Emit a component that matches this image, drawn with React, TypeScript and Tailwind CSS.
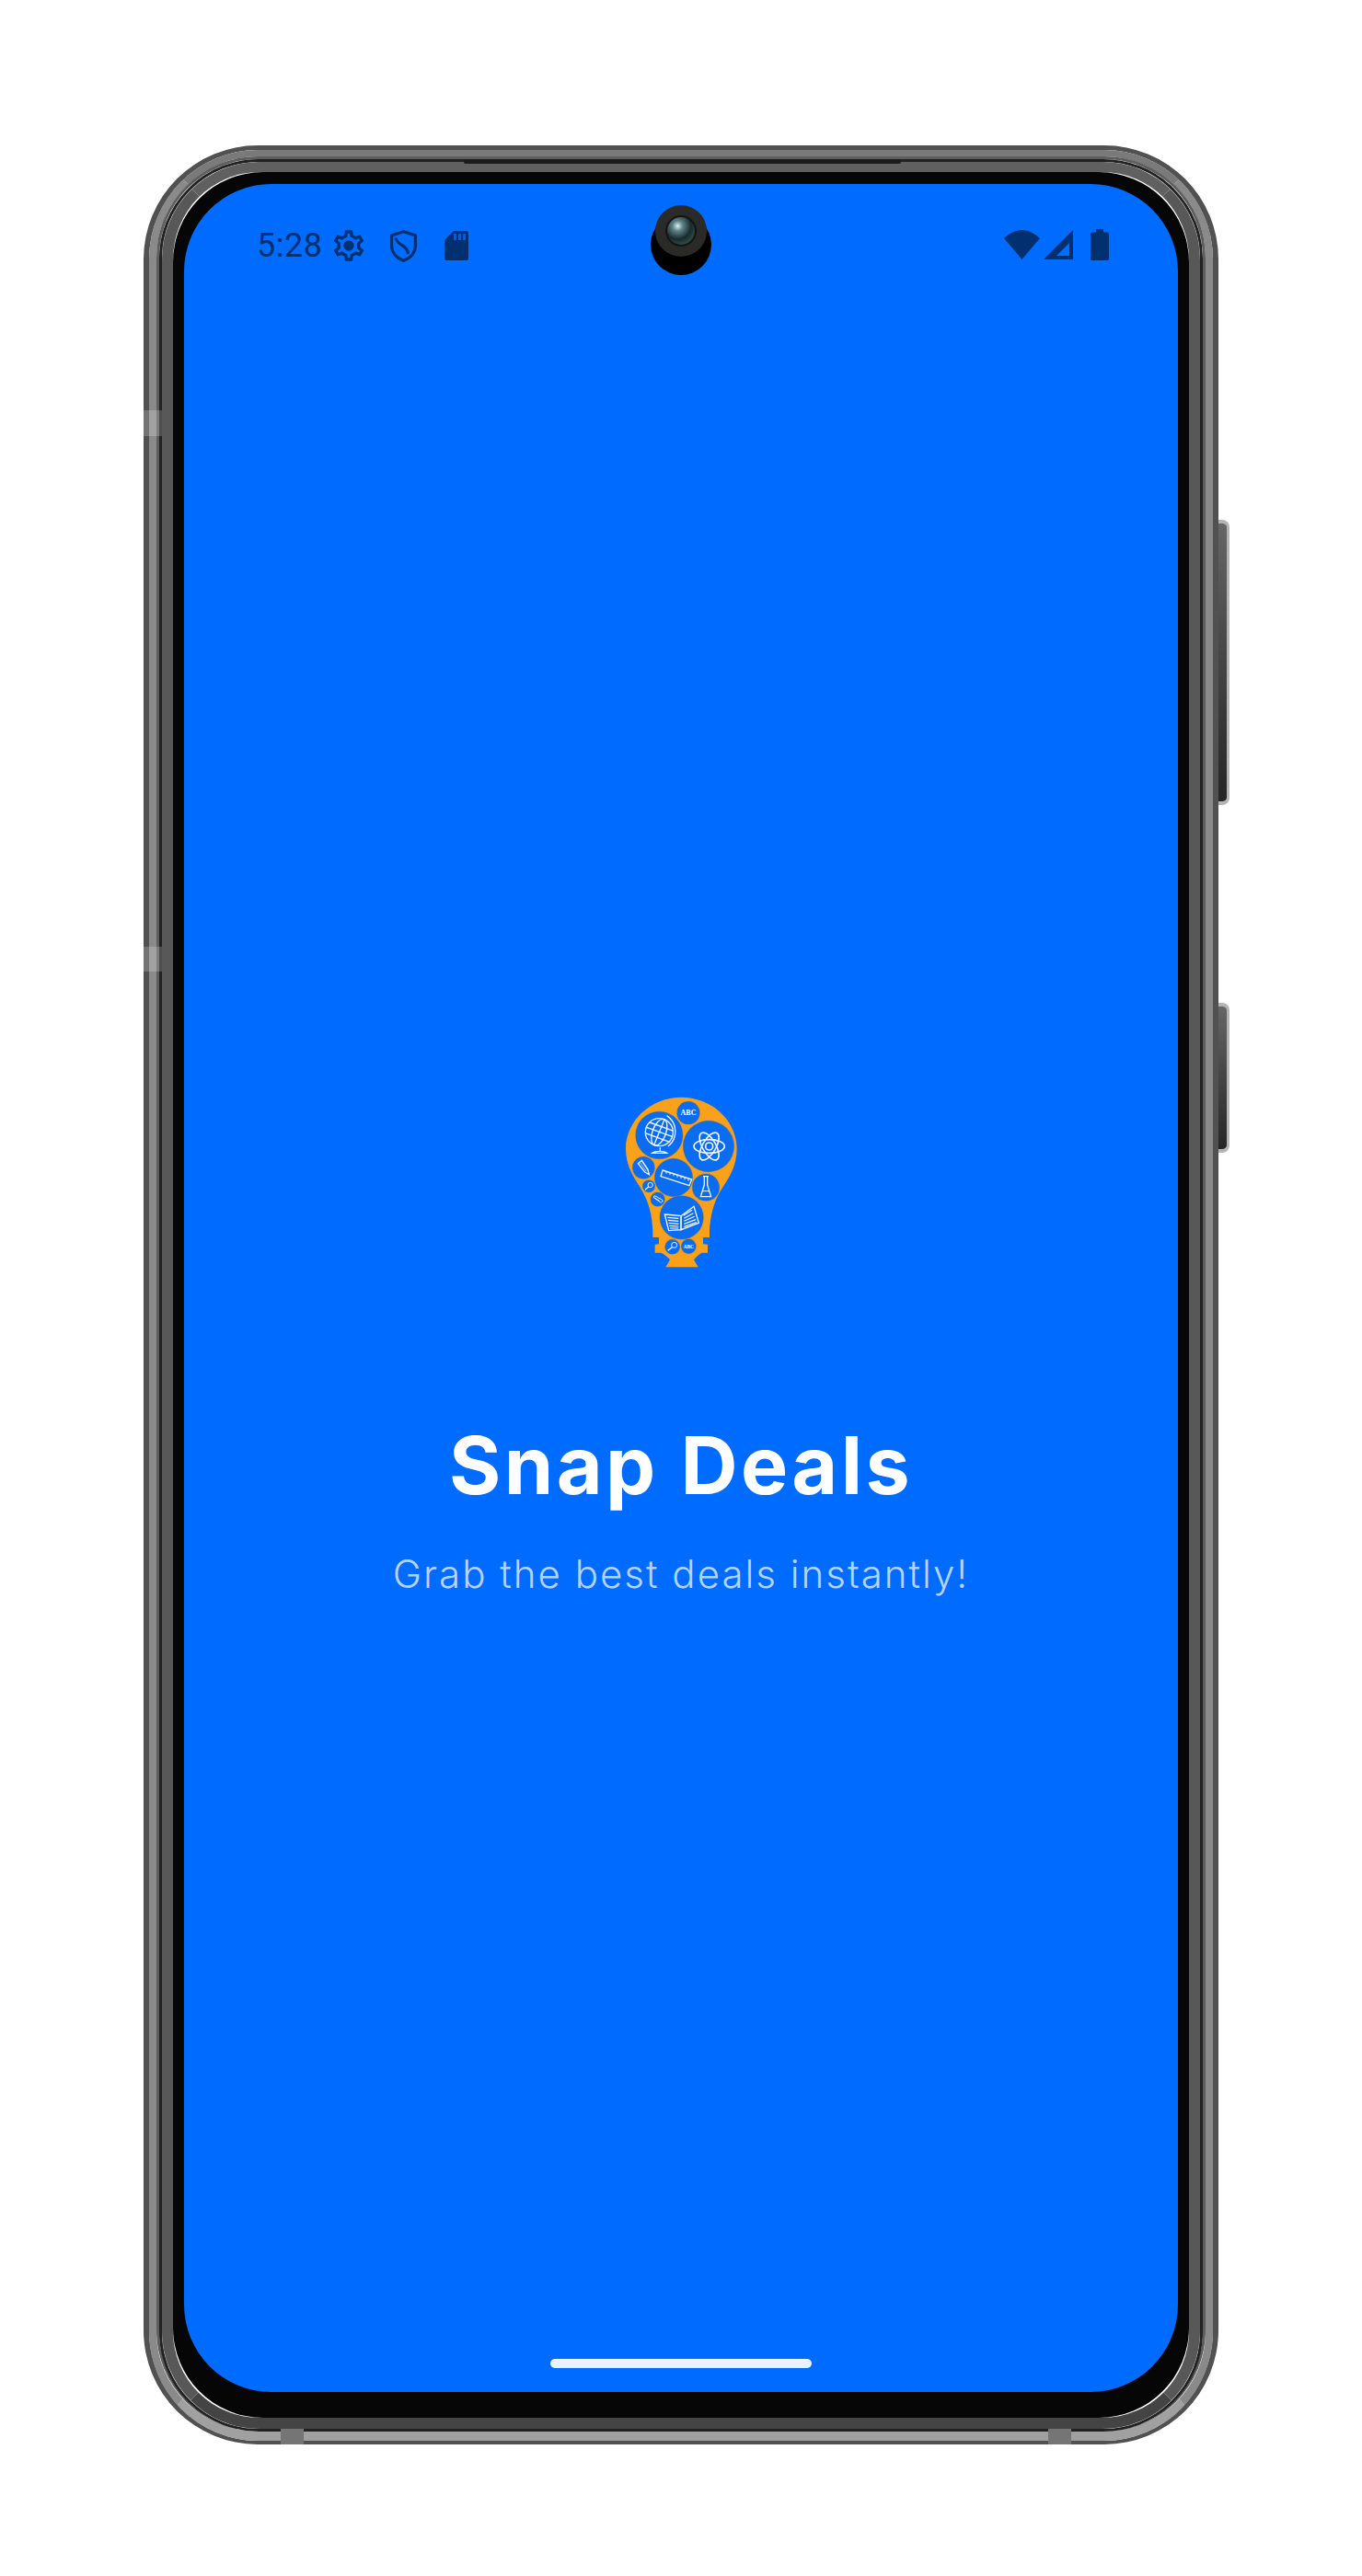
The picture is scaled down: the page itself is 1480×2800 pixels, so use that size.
import React from "react";

const ink = "#003070";

function Gear() {
  return (
    <svg width="40" height="40" viewBox="0 0 24 24" fill={ink} className="ml-[11px] mr-[25px]">
      <path d="M19.43 12.98c.04-.32.07-.64.07-.98 0-.34-.03-.66-.07-.98l2.11-1.65c.19-.15.24-.42.12-.64l-2-3.46c-.09-.16-.26-.25-.44-.25-.06 0-.12.01-.17.03l-2.49 1c-.52-.4-1.08-.73-1.69-.98l-.38-2.65C14.46 2.18 14.25 2 14 2h-4c-.25 0-.46.18-.49.42l-.38 2.65c-.61.25-1.17.59-1.69.98l-2.49-1c-.06-.02-.12-.03-.18-.03-.17 0-.34.09-.43.25l-2 3.46c-.13.22-.07.49.12.64l2.11 1.65c-.04.32-.07.65-.07.98 0 .33.03.66.07.98l-2.11 1.65c-.19.15-.24.42-.12.64l2 3.46c.09.16.26.25.44.25.06 0 .12-.01.17-.03l2.49-1c.52.4 1.08.73 1.69.98l.38 2.65c.03.24.24.42.49.42h4c.25 0 .46-.18.49-.42l.38-2.65c.61-.25 1.17-.59 1.69-.98l2.49 1c.06.02.12.03.18.03.17 0 .34-.09.43-.25l2-3.46c.12-.22.07-.49-.12-.64l-2.11-1.65zm-1.98-1.71c.04.31.05.52.05.73 0 .21-.02.43-.05.73l-.14 1.13.89.7 1.08.84-.7 1.21-1.27-.51-1.04-.42-.9.68c-.43.32-.84.56-1.25.73l-1.06.43-.16 1.13-.2 1.35h-1.4l-.19-1.35-.16-1.13-1.06-.43c-.43-.18-.83-.41-1.23-.71l-.91-.7-1.06.43-1.27.51-.7-1.21 1.08-.84.89-.7-.14-1.13c-.03-.31-.05-.54-.05-.74s.02-.43.05-.73l.14-1.13-.89-.7-1.08-.84.7-1.21 1.27.51 1.04.42.9-.68c.43-.32.84-.56 1.25-.73l1.06-.43.16-1.13.2-1.35h1.39l.19 1.35.16 1.13 1.06.43c.43.18.83.41 1.23.71l.91.7 1.06-.43 1.27-.51.7 1.21-1.07.85-.89.7.14 1.13z" />
      <circle cx="12" cy="12" r="3.4" />
    </svg>
  );
}

function Shield() {
  return (
    <svg width="29" height="35" viewBox="0 0 29 35" fill="none" stroke={ink} strokeWidth="3.2" className="mr-[30px]">
      <path d="M14.5 1.7 27.4 6v11c0 7.5-5.2 13.6-12.9 16.2C6.8 30.6 1.6 24.5 1.6 17V6Z" />
      <path d="M6 8.500c1 4.500 4 6.500 7.500 8.500 3.500 2 5.500 5 6 9" />
    </svg>
  );
}

function Sd() {
  return (
    <svg width="26" height="32" viewBox="0 0 26 32">
      <path d="M10 0h14a2 2 0 0 1 2 2v28a2 2 0 0 1-2 2H2a2 2 0 0 1-2-2V10Z" fill={ink} />
      <rect x="10" y="3" width="3" height="7" fill="#006cff" opacity="0.75" />
      <rect x="15" y="3" width="3" height="7" fill="#006cff" opacity="0.75" />
      <rect x="20" y="3" width="3" height="7" fill="#006cff" opacity="0.75" />
    </svg>
  );
}

function Wifi() {
  return (
    <svg width="39" height="32" viewBox="0 0 39 32" fill={ink} className="mr-[4px]">
      <path d="M0 9Q19.500-9 39 9L19.500 32Z" />
    </svg>
  );
}

function Signal() {
  return (
    <svg width="32" height="32" viewBox="0 0 32 32" fill={ink} fillRule="evenodd" className="mr-[19px]">
      <path d="M0 32 32 0v32ZM14 28h14V14Z" />
    </svg>
  );
}

function Battery() {
  return (
    <svg width="20" height="34" viewBox="0 0 20 34" fill={ink}>
      <path d="M6 0h8v3.500h4a2 2 0 0 1 2 2V32a2 2 0 0 1-2 2H2a2 2 0 0 1-2-2V5.500a2 2 0 0 1 2-2h4Z" />
    </svg>
  );
}

const bulb =
  "M241 68C340 68 422 145 422 235C422 300 392 335 366 378C348 410 336 450 333 503L333 525L312 525L312 547L327 548L327 575L308 575C298 580 288 590 282 598L296 622L190 622L204 598C198 590 186 580 175 575L155 575L155 548L168 547L168 525L148 525L148 503C146 450 134 410 116 378C92 335 60 300 60 235C60 145 142 68 241 68Z";

const discs: [number, number, number][] = [
  [264, 119, 37],
  [169, 192, 77],
  [330, 228, 83],
  [118, 298, 36],
  [216, 330, 62],
  [321, 362, 44],
  [135, 358, 20],
  [164, 401, 23],
  [242, 460, 71],
  [212, 556, 24],
  [265, 554, 24],
];

function Logo() {
  return (
    <svg width="160" height="220" viewBox="0 0 480 660" className="block">
      <path d={bulb} fill="#f9a11b" />
      {discs.map(([x, y, r], i) => (
        <g key={i}>
          <circle cx={x} cy={y} r={r + 1.5} fill="#a07a2a" opacity="0.55" />
          <circle cx={x} cy={y} r={r} fill="#0a6cf0" />
        </g>
      ))}
      <g fill="none" stroke="#f2f7ff" strokeWidth="4">
        <circle cx="169" cy="182" r="45" />
        <ellipse cx="169" cy="182" rx="22" ry="45" transform="rotate(20 169 182)" />
        <path d="M186 140 152 224M128 166 211 196M124 185 205 215M138 150 216 178" />
        <path d="M194 128a62 62 0 0 1 4 100M172 232v14M146 250c10-8 38-8 48 0Z" />
        <ellipse cx="332" cy="228" rx="50" ry="22" strokeWidth="5" />
        <ellipse cx="332" cy="228" rx="50" ry="22" strokeWidth="5" transform="rotate(60 332 228)" />
        <ellipse cx="332" cy="228" rx="50" ry="22" strokeWidth="5" transform="rotate(-60 332 228)" />
        <circle cx="332" cy="228" r="12" strokeWidth="5" />
        <path d="M100 284 112 274 132 304 136 320 122 312Z" />
        <path d="M106 280 127 310M112 276 131 304" strokeWidth="2" />
        <path d="M180 306 275 336 267 356 174 326Z" />
        <path d="M192 310v7M204 314v7M216 318v7M228 322v7M240 326v7M252 330v7M264 334v7" strokeWidth="3" />
        <path d="M312 326h18M316 326v28L304 392h34L326 354V326" />
        <path d="M310 374h22" strokeWidth="3" />
        <circle cx="140" cy="354" r="8" strokeWidth="3" />
        <path d="M134 360 123 370" strokeWidth="4" />
        <path d="M150 394 172 410a5 5 0 0 0 6-8L156 390a3 3 0 0 0-4 5L170 406" strokeWidth="3" />
        <path d="M187 450 240 455V500L200 503Z" />
        <path d="M240 455 282 424 298 478 240 500Z" />
        <path d="M196 460 232 463M198 469 232 472M200 478 232 481M202 487 232 489M204 495 232 495" strokeWidth="3.500" />
        <path d="M248 454 276 436M250 463 280 446M250 472 284 457M250 481 288 467M250 490 291 476" strokeWidth="3.500" />
        <circle cx="218" cy="550" r="9" strokeWidth="3" />
        <path d="M211 557 197 568" strokeWidth="4" />
      </g>
      <text x="264" y="126" textAnchor="middle" fontFamily="Liberation Serif, serif" fontWeight="700" fontSize="24" fill="#ffffff">ABC</text>
      <text x="265" y="560" textAnchor="middle" fontFamily="Liberation Serif, serif" fontWeight="700" fontSize="16" fill="#ffffff">ABC</text>
    </svg>
  );
}

export default function App() {
  return (
    <div className="h-[2800px] bg-white pt-[158px]">
      <div className="relative mx-auto w-[1168px]">
        <div className="absolute left-[1168px] top-[407px] h-[310px] w-[12px] rounded-r-[8px] border-y-[4px] border-r-[3px] border-[#b4b4b4] bg-gradient-to-b from-[#666666] to-[#262626]" />
        <div className="absolute left-[1168px] top-[932px] h-[163px] w-[12px] rounded-r-[8px] border-y-[4px] border-r-[3px] border-[#b4b4b4] bg-gradient-to-b from-[#666666] to-[#262626]" />

        <div className="rounded-[124px] border-t-[5px] border-b-[4px] border-l-[6px] border-r-[6px] border-[#515151]">
          <div className="rounded-[118px] border-t-[7px] border-b-[10px] border-l-[8px] border-r-[8px] border-t-[#7a7a7a] border-b-[#a0a0a0] border-x-[#8a8a8a]">
            <div className="rounded-[110px] border-t-[3px] border-b-[0px] border-x-[3px] border-[#5e5e5e]">
              <div className="rounded-[108px] border-[3px] border-[#222222]">
                <div className="rounded-[106px] border-t-[11px] border-b-[12px] border-x-[12px] border-t-[#606060] border-b-[#444444] border-x-[#585858]">
                  <div className="rounded-[98px] border-t-[13px] border-b-[28px] border-x-[12px] border-[#060606] bg-[#060606]">
                    <div className="relative flex h-[2400px] w-[1080px] flex-col overflow-hidden rounded-[95px] bg-[#006cff]">
                      <div className="flex h-[100px] shrink-0 items-start justify-between pl-[79px] pr-[75px] pt-[44px]">
                        <div className="flex items-center pt-[2px]">
                          <span className="w-[69px] font-['Roboto',sans-serif] text-[36px] leading-[42px] tracking-[0.5px]" style={{ color: ink }}>5:28</span>
                          <Gear />
                          <Shield />
                          <Sd />
                        </div>
                        <div className="flex items-center pt-[5px]">
                          <Wifi />
                          <Signal />
                          <Battery />
                        </div>
                      </div>

                      <div className="absolute left-[507px] top-[33px] h-[66px] w-[66px] rounded-full bg-black" />
                      <div className="absolute left-[512px] top-[23px] flex h-[56px] w-[56px] items-center justify-center rounded-full bg-[#2a2a28]">
                        <div className="h-[34px] w-[34px] rounded-full border-[2px] border-[#141414] bg-[radial-gradient(circle_at_38%_32%,#dfeeee_0%,#5e8488_20%,#1a2a2c_52%,#2f4f4a_78%,#121c1c_100%)]" />
                      </div>

                      <div className="flex flex-1 flex-col items-center pt-[870px]">
                        <Logo />
                        <h1 className="mt-[153px] font-['Inter',sans-serif] text-[86px] font-bold leading-[100px] tracking-[3.4px] text-white">Snap Deals</h1>
                        <p className="mt-[43px] font-['Inter',sans-serif] text-[42px] font-light leading-[50px] tracking-[2px] text-[#b4d3ff]">Grab the best deals instantly!</p>
                      </div>

                      <div className="mx-auto mb-[26px] h-[10px] w-[284px] shrink-0 rounded-full bg-[#eaf1ff]" />
                    </div>
                  </div>
                </div>
              </div>
            </div>
          </div>
        </div>

        <div className="absolute left-[348px] top-[15px] h-[5px] w-[475px] rounded-b-[2px] bg-[#1c1c1c]" />
        <div className="absolute left-0 top-[288px] h-[28px] w-[20px] bg-white/20" />
        <div className="absolute left-0 top-[871px] h-[27px] w-[20px] bg-white/20" />
        <div className="absolute bottom-0 left-[149px] h-[17px] w-[25px] bg-[#757575]" />
        <div className="absolute bottom-0 left-[983px] h-[17px] w-[25px] bg-[#757575]" />
      </div>
    </div>
  );
}
